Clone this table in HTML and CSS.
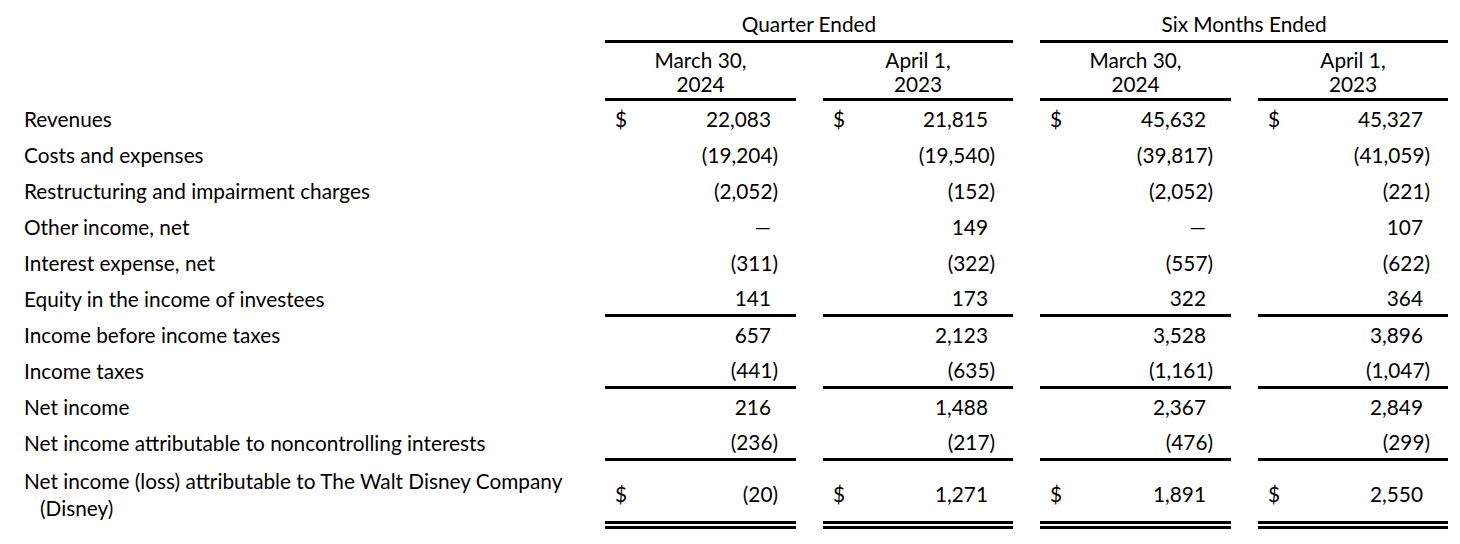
FILE: index.html
```html
<!DOCTYPE html>
<html lang="en">
<head>
<meta charset="utf-8">
<title>Condensed Consolidated Statements of Income</title>
<link rel="stylesheet" href="styles.css">
</head>
<body>
<div class="stmt">
  <div class="cell"></div>
  <div class="period span2">Quarter Ended</div>
  <div class="period span2">Six Months Ended</div>

  <div class="cell"></div>
  <div class="date">March 30,<br>2024</div>
  <div class="date">April 1,<br>2023</div>
  <div class="date">March 30,<br>2024</div>
  <div class="date">April 1,<br>2023</div>

  <div class="label">Revenues</div>
  <div class="val"><span class="cur">$</span><span class="num">22,083</span></div>
  <div class="val"><span class="cur">$</span><span class="num">21,815</span></div>
  <div class="val"><span class="cur">$</span><span class="num">45,632</span></div>
  <div class="val"><span class="cur">$</span><span class="num">45,327</span></div>

  <div class="label">Costs and expenses</div>
  <div class="val"><span class="num neg">(19,204)</span></div>
  <div class="val"><span class="num neg">(19,540)</span></div>
  <div class="val"><span class="num neg">(39,817)</span></div>
  <div class="val"><span class="num neg">(41,059)</span></div>

  <div class="label">Restructuring and impairment charges</div>
  <div class="val"><span class="num neg">(2,052)</span></div>
  <div class="val"><span class="num neg">(152)</span></div>
  <div class="val"><span class="num neg">(2,052)</span></div>
  <div class="val"><span class="num neg">(221)</span></div>

  <div class="label">Other income, net</div>
  <div class="val"><span class="num">—</span></div>
  <div class="val"><span class="num">149</span></div>
  <div class="val"><span class="num">—</span></div>
  <div class="val"><span class="num">107</span></div>

  <div class="label">Interest expense, net</div>
  <div class="val"><span class="num neg">(311)</span></div>
  <div class="val"><span class="num neg">(322)</span></div>
  <div class="val"><span class="num neg">(557)</span></div>
  <div class="val"><span class="num neg">(622)</span></div>

  <div class="label">Equity in the income of investees</div>
  <div class="val rule"><span class="num">141</span></div>
  <div class="val rule"><span class="num">173</span></div>
  <div class="val rule"><span class="num">322</span></div>
  <div class="val rule"><span class="num">364</span></div>

  <div class="label">Income before income taxes</div>
  <div class="val"><span class="num">657</span></div>
  <div class="val"><span class="num">2,123</span></div>
  <div class="val"><span class="num">3,528</span></div>
  <div class="val"><span class="num">3,896</span></div>

  <div class="label">Income taxes</div>
  <div class="val rule"><span class="num neg">(441)</span></div>
  <div class="val rule"><span class="num neg">(635)</span></div>
  <div class="val rule"><span class="num neg">(1,161)</span></div>
  <div class="val rule"><span class="num neg">(1,047)</span></div>

  <div class="label">Net income</div>
  <div class="val"><span class="num">216</span></div>
  <div class="val"><span class="num">1,488</span></div>
  <div class="val"><span class="num">2,367</span></div>
  <div class="val"><span class="num">2,849</span></div>

  <div class="label">Net income attributable to noncontrolling interests</div>
  <div class="val rule"><span class="num neg">(236)</span></div>
  <div class="val rule"><span class="num neg">(217)</span></div>
  <div class="val rule"><span class="num neg">(476)</span></div>
  <div class="val rule"><span class="num neg">(299)</span></div>

  <div class="label total">Net income (loss) attributable to The Walt Disney Company (Disney)</div>
  <div class="val double"><span class="cur">$</span><span class="num neg">(20)</span></div>
  <div class="val double"><span class="cur">$</span><span class="num">1,271</span></div>
  <div class="val double"><span class="cur">$</span><span class="num">1,891</span></div>
  <div class="val double"><span class="cur">$</span><span class="num">2,550</span></div>
</div>
</body>
</html>
```

FILE: styles.css
```css
html, body {
  margin: 0;
  padding: 0;
  background: #ffffff;
}

body {
  font-family: "Lato", "Open Sans", sans-serif;
  font-size: 20.8px;
  color: #000000;
}

.stmt {
  display: grid;
  grid-template-columns: 578px 191px 190px 191px 190px;
  column-gap: 27px;
}

.cell {
  height: 43px;
}

.period {
  grid-column: span 2;
  border-bottom: 3px solid #000;
  text-align: center;
  line-height: 24px;
  padding-top: 12px;
  box-sizing: border-box;
  height: 43px;
}

.date {
  text-align: center;
  line-height: 24px;
  padding-top: 5px;
  height: 58px;
  box-sizing: border-box;
  border-bottom: 3px solid #000;
}

.label {
  padding-left: 24px;
  padding-bottom: 2px;
  height: 36px;
  display: flex;
  align-items: center;
  box-sizing: border-box;
}

.val {
  height: 36px;
  padding-bottom: 2px;
  display: flex;
  align-items: center;
  justify-content: space-between;
  box-sizing: border-box;
}

.cur {
  padding-left: 10px;
}

.num {
  margin-left: auto;
  padding-right: 25px;
}

.num.neg {
  padding-right: 18px;
}

.rule {
  border-bottom: 3px solid #000;
}

.rule.val {
  padding-bottom: 0;
}

.label.total {
  display: block;
  height: 60px;
  padding-top: 6px;
  padding-bottom: 0;
  padding-left: 40px;
  text-indent: -16px;
  line-height: 27px;
  box-sizing: border-box;
}

.val.double {
  height: 68px;
  padding-top: 4px;
  padding-bottom: 0;
  border-bottom: 8px double #000;
}
```
